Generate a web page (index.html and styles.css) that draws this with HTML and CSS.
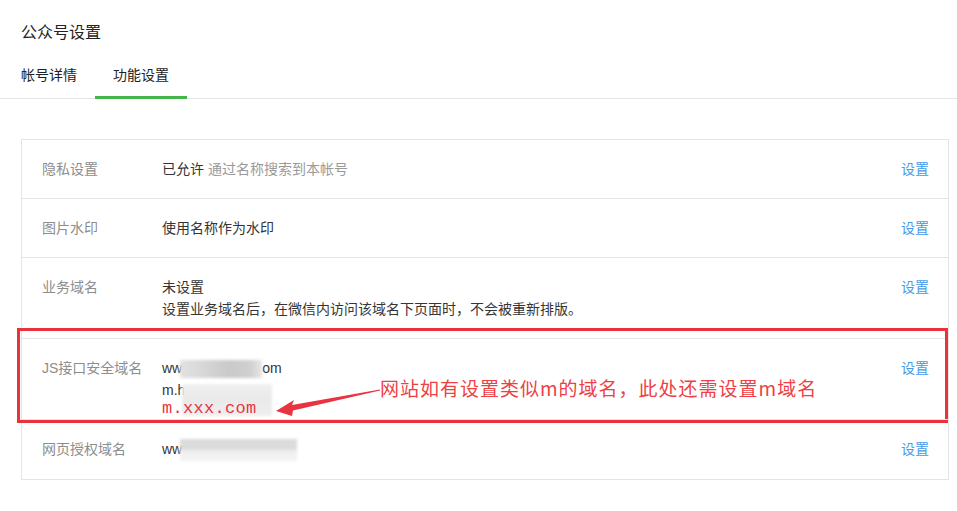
FILE: index.html
```html
<!DOCTYPE html>
<html>
<head>
	<meta charset="UTF-8">
	<title>公众号设置</title>
	<link rel="stylesheet" href="styles.css">
</head>
<body>
	<div class="page-hd">
		<h2 class="page-title">公众号设置</h2>
		<ul class="tabs">
			<li class="tab">帐号详情</li>
			<li class="tab tab-on">功能设置</li>
		</ul>
	</div>

	<div class="setting-list">
		<div class="item">
			<div class="item-label">隐私设置</div>
			<div class="item-value">已允许 <span class="tips">通过名称搜索到本帐号</span></div>
			<a class="item-opr">设置</a>
		</div>
		<div class="item">
			<div class="item-label">图片水印</div>
			<div class="item-value">使用名称作为水印</div>
			<a class="item-opr">设置</a>
		</div>
		<div class="item">
			<div class="item-label">业务域名</div>
			<div class="item-value">
				<p>未设置</p>
				<p>设置业务域名后，在微信内访问该域名下页面时，不会被重新排版。</p>
			</div>
			<a class="item-opr">设置</a>
		</div>
		<div class="item item-mark">
			<div class="item-label">JS接口安全域名</div>
			<div class="item-value">
				<p>ww<span class="mosaic mosaic-a"></span>om</p>
				<p>m.h<span class="mosaic mosaic-b"></span></p>
			</div>
			<a class="item-opr">设置</a>

			<!-- 标注 -->
			<div class="mark-box"></div>
			<div class="mark-domain">m.xxx.com</div>
			<svg class="mark-arrow" width="115" height="36" viewBox="0 0 115 36">
				<polygon points="4,27 22,16 20,21 108,5.5 108,6.5 21,26.5 20,32" fill="#ea3340"/>
			</svg>
			<div class="mark-text">网站如有设置类似m的域名，此处还需设置m域名</div>
		</div>
		<div class="item">
			<div class="item-label">网页授权域名</div>
			<div class="item-value">
				<p>ww<span class="mosaic mosaic-c"></span></p>
			</div>
			<a class="item-opr">设置</a>
		</div>
	</div>
</body>
</html>
```

FILE: styles.css
```css
html {
	margin: 0;
}

body {
	margin: 0;
	background: #fff;
	color: #353535;
	font-family: "Liberation Sans", "Noto Sans CJK SC", sans-serif;
	font-size: 14px;
}

p {
	margin: 0;
}

.page-hd {
	padding-top: 21px;
	border-bottom: 1px solid #e4e4e4;
}

.page-title {
	margin: 0;
	padding-left: 21px;
	font-size: 16px;
	font-weight: normal;
	line-height: 24px;
	color: #222;
}

.tabs {
	display: flex;
	list-style: none;
	margin: 20px 0 0 0;
	padding: 0 0 0 21px;
}

.tab {
	padding: 0 18px 11px;
	line-height: 20px;
	border-bottom: 3px solid transparent;
	margin-bottom: -1px;
	color: #222;
}

.tab:first-child {
	padding-left: 0;
}

.tab-on {
	border-bottom-color: #44b549;
}

.setting-list {
	margin: 40px 8px 0 21px;
	border: 1px solid #e4e4e4;
}

.item {
	position: relative;
	display: flex;
	align-items: flex-start;
	padding: 18px 19px 18px 20px;
	line-height: 22px;
	border-top: 1px solid #e4e4e4;
}

.item:first-child {
	border-top: 0;
}

.item-label {
	width: 120px;
	flex: none;
	color: #8d8d8d;
}

.item-value {
	flex: 1;
}

.tips {
	color: #9a9a9a;
}

.item-opr {
	color: #459ae9;
	cursor: pointer;
}

.mosaic {
	display: inline-block;
	vertical-align: middle;
	filter: blur(1.5px);
}

.mosaic-a {
	width: 82px;
	height: 18px;
	margin: 0 0 0 -2px;
	background: linear-gradient(90deg, #e2e2e2, #d6d6d6 30%, #c9c9c9 60%, #cfcfcf 85%, #e6e6e6);
}

.mosaic-b {
	width: 90px;
	height: 32px;
	margin: 0 0 -18px -3px;
	background: linear-gradient(180deg, #f0f0f0, #e9e9e9 45%, #eeeeee);
}

.mosaic-c {
	width: 117px;
	height: 22px;
	margin-left: -2px;
	background: linear-gradient(180deg, #dadada, #dcdcdc 45%, #efefef 55%, #f3f3f3);
}

.mark-box {
	position: absolute;
	left: -5px;
	top: -11px;
	width: 925px;
	height: 89px;
	border: 3px solid #e8323c;
}

.mark-domain {
	position: absolute;
	left: 140px;
	top: 59px;
	font-family: "Liberation Mono", monospace;
	font-size: 17px;
	line-height: 22px;
	letter-spacing: 0.3px;
	color: #ea3340;
}

.mark-arrow {
	position: absolute;
	left: 250px;
	top: 45px;
}

.mark-text {
	position: absolute;
	left: 358px;
	top: 36px;
	font-family: "Noto Sans CJK SC", sans-serif;
	font-size: 19px;
	line-height: 26px;
	letter-spacing: 1px;
	color: #ee3f45;
	white-space: nowrap;
}
```
